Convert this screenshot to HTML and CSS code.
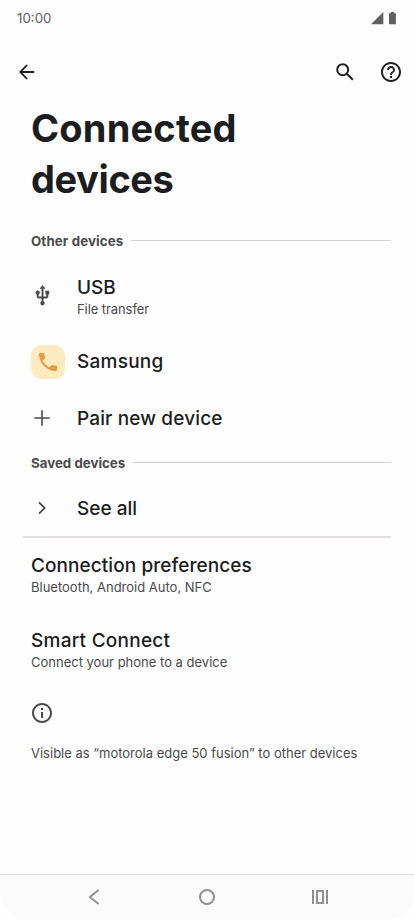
FILE: index.html
```html
<!DOCTYPE html>
<html lang="en">
<head>
<meta charset="utf-8">
<meta name="viewport" content="width=device-width, initial-scale=1">
<title>Connected devices</title>
<link rel="stylesheet" href="styles.css">
</head>
<body>
<div class="phone">
  <header class="status">
    <span class="clock">10:00</span>
    <svg class="signals" width="26" height="13" viewBox="0 0 26 13" fill="#606060"><path d="M0 12.3 12.3 0v12.3z"/><path d="M18 1.3h1.7V0h3.5v1.3h1.7v11H18z"/></svg>
  </header>
  <nav class="appbar">
    <svg class="back" width="16" height="16" viewBox="0 0 16 16" fill="none" stroke="#202124" stroke-width="1.8"><path d="M15.2 8H1.5M8 1.2 1.3 8 8 14.8"/></svg>
    <svg class="search" width="18" height="18" viewBox="0 0 18 18" fill="none" stroke="#202124" stroke-width="2"><circle cx="6.7" cy="6.7" r="5.5"/><path d="m10.8 10.8 6 6"/></svg>
    <svg class="help" width="20" height="20" viewBox="2 2 20 20" fill="#202124"><path d="M11 18h2v-2h-2v2zm1-16C6.48 2 2 6.48 2 12s4.480 10 10 10 10-4.480 10-10S17.520 2 12 2zm0 18c-4.410 0-8-3.590-8-8s3.590-8 8-8 8 3.590 8 8-3.590 8-8 8zm0-14c-2.210 0-4 1.790-4 4h2c0-1.100.900-2 2-2s2 .900 2 2c0 2-3 1.750-3 5h2c0-2.250 3-2.500 3-5 0-2.210-1.790-4-4-4z"/></svg>
  </nav>
  <main class="content">
    <h1>Connected<br><span class="tight">devices</span></h1>
    <h2 class="section other"><span>Other devices</span></h2>
    <div class="row usb">
      <span class="icon"><svg width="23" height="23" viewBox="0 0 24 24" fill="#494a4c"><path d="M15 7v4h1v2h-3V5h2l-3-4-3 4h2v8H8v-2.070c.700-.370 1.200-1.080 1.200-1.930 0-1.210-.990-2.200-2.200-2.200S4.800 7.790 4.800 9c0 .850.500 1.560 1.200 1.930V13c0 1.110.890 2 2 2h3v3.050c-.710.370-1.200 1.100-1.200 1.950 0 1.220.990 2.200 2.200 2.200s2.200-.980 2.200-2.200c0-.850-.490-1.580-1.200-1.950V15h3c1.110 0 2-.890 2-2v-2h1V7h-4z"/></svg></span>
      <div><div class="title t-usb">USB</div><div class="sub s-usb">File transfer</div></div>
    </div>
    <div class="row samsung">
      <span class="icon"><span class="tile"><svg width="18" height="18" viewBox="3 3 18 18" fill="#e69a43"><path d="M6.620 10.790c1.440 2.830 3.760 5.140 6.590 6.590l2.200-2.200c.270-.270.670-.360 1.020-.240 1.120.370 2.330.570 3.570.570.550 0 1 .450 1 1V20c0 .550-.450 1-1 1-9.390 0-17-7.610-17-17 0-.550.450-1 1-1h3.500c.550 0 1 .450 1 1 0 1.250.200 2.450.570 3.570.110.350.030.740-.250 1.020l-2.200 2.200z"/></svg></span></span>
      <div class="title t-sam">Samsung</div>
    </div>
    <div class="row pair">
      <span class="icon"><svg width="16" height="16" viewBox="0 0 16 16" fill="none" stroke="#494a4c" stroke-width="1.6"><path d="M8 .3v15.400M.3 8h15.400"/></svg></span>
      <div class="title t-pair">Pair new device</div>
    </div>
    <h2 class="section saved"><span>Saved devices</span></h2>
    <div class="row all">
      <span class="icon"><svg width="8" height="14" viewBox="0 0 8 14" fill="none" stroke="#494a4c" stroke-width="1.8"><path d="m1 1.300 5.700 5.700L1 12.700"/></svg></span>
      <div class="title t-all">See all</div>
    </div>
    <div class="block prefs"><div class="title t-pref">Connection preferences</div><div class="sub s-pref">Bluetooth, Android Auto, NFC</div></div>
    <div class="block smart"><div class="title t-smart">Smart Connect</div><div class="sub s-smart">Connect your phone to a device</div></div>
    <svg class="info" width="20" height="20" viewBox="2 2 20 20" fill="#494a4c"><path d="M11 7h2v2h-2zm0 4h2v6h-2zm1-9C6.480 2 2 6.480 2 12s4.480 10 10 10 10-4.480 10-10S17.520 2 12 2zm0 18c-4.410 0-8-3.590-8-8s3.590-8 8-8 8 3.590 8 8-3.590 8-8 8z"/></svg>
    <p class="sub visible">Visible as “motorola edge 50 fusion” to other devices</p>
  </main>
  <footer class="navbar">
    <svg width="12" height="16" viewBox="0 0 12 16"><path d="M10.500 1 2 8l8.500 7"/></svg>
    <svg class="home" width="16" height="16" viewBox="0 0 16 16"><circle cx="8" cy="8" r="7"/></svg>
    <svg width="16" height="14" viewBox="0 0 16 14"><path d="M1 0v14M15 0v14M5 1h6v12H5z"/></svg>
  </footer>
</div>
</body>
</html>
```
FILE: styles.css
```css
* { box-sizing: border-box; }
body { margin: 0; background: #fff; font-family: Inter, "Open Sans", sans-serif; color: #1c1d21; }
svg { display: block; flex: none; }
.phone { width: 414px; height: 920px; display: flex; flex-direction: column; background: #fefefe; overflow: hidden; }
.status { height: 36px; padding: 0 17px; display: flex; align-items: center; justify-content: space-between; }
.clock { font-size: 13.3px; color: #606060; }
.appbar { height: 66px; padding: 6px 13px 0 19px; display: flex; align-items: center; }
.search { margin-left: auto; margin-right: 27px; }
.content { flex: 1; padding: 0 23px 0 31px; white-space: nowrap; }
h1 { margin: 1px 0 0; height: 102px; font-size: 38px; line-height: 51px; font-weight: 700; letter-spacing: .2px; }
.tight { letter-spacing: -.4px; }
.section { margin: 0; height: 20px; display: flex; align-items: center; gap: 8px; font-size: 13.3px; line-height: 20px; font-weight: 700; color: #494a4c; }
.section::after { content: ""; flex: 1; height: 1px; margin-top: -1px; background: #d3d3d3; }
.other { margin-top: 26px; letter-spacing: .12px; }
.row { display: flex; align-items: center; }
.icon { width: 22px; margin-right: 24px; flex: none; display: flex; justify-content: center; }
.tile { width: 34px; height: 34px; margin: 0 -6px 0 6px; flex: none; border-radius: 10px; display: flex; align-items: center; justify-content: center; background: #fdebc0; }
.title { font-size: 19px; line-height: 24px; font-weight: 500; }
.sub { font-size: 13px; line-height: 18px; color: #494a4c; }
.usb { height: 42px; margin-top: 25px; }
.usb .icon { margin-top: -4px; }
.s-usb { letter-spacing: -.08px; }
.samsung { height: 36px; margin-top: 26px; }
.samsung .icon { margin-top: -1px; }
.pair { height: 24px; margin-top: 27px; }
.pair .icon, .all .icon { margin-top: -2px; }
.saved { margin-top: 22px; }
.all { height: 64px; margin: 1px 0 0 -8px; padding: 8px 0 0 8px; border-bottom: 2px solid #e5e1e2; }
.t-sam, .t-smart { letter-spacing: .25px; }
.t-pair { letter-spacing: .13px; }
.t-pref { letter-spacing: .07px; }
.block { height: 42px; }
.prefs { margin-top: 16px; }
.smart { margin-top: 33px; }
.info { margin: 32px 0 0 1px; }
.visible { margin: 21px 0 0; }
.navbar { height: 46px; padding: 0 86px 2px 88px; display: flex; align-items: center; justify-content: space-between; background: #fbfbfb; border-top: 1px solid #dedede; border-radius: 0 0 28px 28px; }
.home { margin-left: 2px; }
.navbar svg { fill: none; stroke: #929292; stroke-width: 2; }
```
